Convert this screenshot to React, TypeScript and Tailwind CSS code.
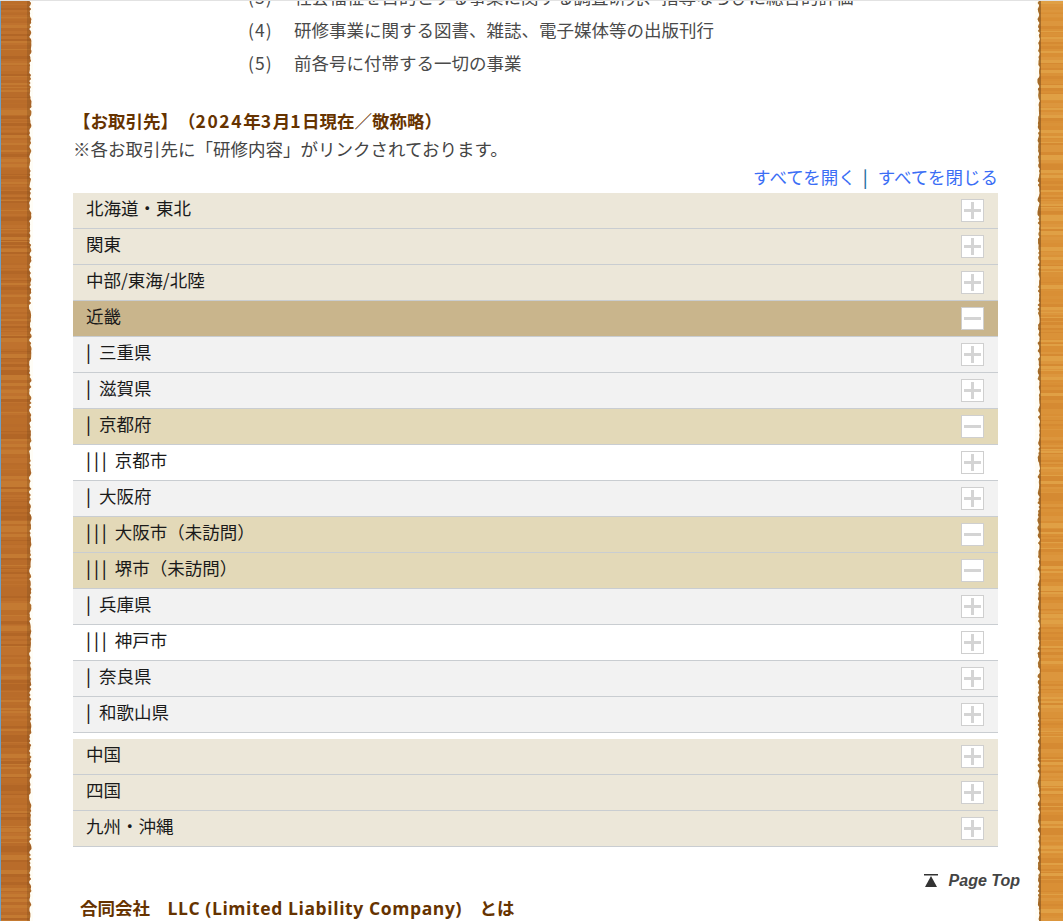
const NOTO = "font-['Noto_Sans_CJK_JP','Noto_Sans',sans-serif]";

type Row = { bars?: number; label: string; kind: "region" | "open" | "pref" | "active" | "city"; minus?: boolean };

const topRows: Row[] = [
  { label: "北海道・東北", kind: "region" },
  { label: "関東", kind: "region" },
  { label: "中部/東海/北陸", kind: "region" },
  { label: "近畿", kind: "open", minus: true },
  { bars: 1, label: "三重県", kind: "pref" },
  { bars: 1, label: "滋賀県", kind: "pref" },
  { bars: 1, label: "京都府", kind: "active", minus: true },
  { bars: 3, label: "京都市", kind: "city" },
  { bars: 1, label: "大阪府", kind: "pref" },
  { bars: 3, label: "大阪市（未訪問）", kind: "active", minus: true },
  { bars: 3, label: "堺市（未訪問）", kind: "active", minus: true },
  { bars: 1, label: "兵庫県", kind: "pref" },
  { bars: 3, label: "神戸市", kind: "city" },
  { bars: 1, label: "奈良県", kind: "pref" },
  { bars: 1, label: "和歌山県", kind: "pref" },
];

const bottomRows: Row[] = [
  { label: "中国", kind: "region" },
  { label: "四国", kind: "region" },
  { label: "九州・沖縄", kind: "region" },
];

const rowBg = {
  region: "bg-[#ece7d9]",
  open: "bg-[#c9b58c]",
  pref: "bg-[#f2f2f2]",
  active: "bg-[#e3d9b8]",
  city: "bg-white",
};

// small seeded random so the torn edge stays the same on every render
function seeded(seed: number) {
  let s = seed;
  return () => {
    s = (s * 9301 + 49297) % 233280;
    return s / 233280;
  };
}

function WoodStrip({ side }: { side: "left" | "right" }) {
  const isLeft = side === "left";
  const w = isLeft ? 33 : 28;
  const rnd = seeded(isLeft ? 17 : 91);
  const tones = isLeft
    ? ["#b96c2b", "#bf722d", "#b26628", "#c47a33", "#bb6e2c"]
    : ["#d98f36", "#dc963d", "#d58a33", "#e0a045", "#da9238"];

  const bands: { y: number; h: number; c: string }[] = [];
  for (let y = 0; y < 921; ) {
    const h = 1 + Math.floor(rnd() * 3);
    bands.push({ y, h, c: tones[Math.floor(rnd() * tones.length)] });
    y += h;
  }

  // torn edge: fine teeth, a dark fringe right behind it
  const pts: string[] = [];
  for (let y = 0; y <= 921; y += 2) {
    const d = 1.5 + rnd() * 2.5;
    pts.push(`${isLeft ? w - d : d + 1},${y}`);
  }
  const edge = isLeft
    ? `0,0 ${pts.join(" ")} 0,921`
    : `${w},0 ${pts.join(" ")} ${w},921`;

  return (
    <svg width={w} height={921} className="block shrink-0" viewBox={`0 0 ${w} 921`}>
      <defs>
        <clipPath id={`wood-${side}`}>
          <polygon points={edge} />
        </clipPath>
        <filter id={`soft-${side}`} x="-20%" y="0" width="140%" height="100%">
          <feGaussianBlur stdDeviation="0.5" />
        </filter>
      </defs>
      <rect x={0} y={0} width={w} height={921} fill="#fffdf6" />
      <g filter={`url(#soft-${side})`}>
        <g clipPath={`url(#wood-${side})`}>
          {bands.map((b) => (
            <rect key={b.y} x={0} y={b.y} width={w} height={b.h} fill={b.c} />
          ))}
          <rect
            x={isLeft ? w - 6 : 0}
            y={0}
            width={6}
            height={921}
            fill="#6e4218"
            opacity={isLeft ? 0.25 : 0.5}
          />
        </g>
      </g>
      {isLeft && <rect x={0} y={0} width={1} height={921} fill="#6f9fc4" />}
    </svg>
  );
}

function ToggleIcon({ minus }: { minus?: boolean }) {
  return (
    <svg width={23} height={23} viewBox="0 0 23 23" className="block">
      <rect x={0.5} y={0.5} width={22} height={22} fill="#ffffff" stroke="#cfcfcf" />
      <rect x={3} y={10} width={17} height={3} fill="#d4d4d4" />
      {!minus && <rect x={10} y={3} width={3} height={17} fill="#d4d4d4" />}
    </svg>
  );
}

function AccordionRow({ row }: { row: Row }) {
  return (
    <div
      className={`flex h-9 items-center justify-between border-b border-[#c9cdd1] pl-[13px] pr-[14px] ${rowBg[row.kind]}`}
    >
      <span className="-mt-[5px] flex text-[17.5px] leading-6 text-[#1a1a1a]">
        {row.bars && <span className="mr-[5px] font-medium tracking-[3px]">{"|".repeat(row.bars)}</span>}
        <span>{row.label}</span>
      </span>
      <ToggleIcon minus={row.minus} />
    </div>
  );
}

export default function App() {
  return (
    <div className={`flex h-[921px] w-[1063px] overflow-hidden border-t border-[#e2e2e2] bg-white [text-spacing-trim:space-all] ${NOTO}`}>
      <WoodStrip side="left" />

      <main className="flex min-w-0 flex-1 flex-col pl-[40px] pr-[37px]">
        <ol className="-mt-[21px] pl-[175px] text-[17.5px] leading-[33px] text-[#4a4a4a]">
          <li className="flex whitespace-nowrap">
            <span className="w-[46px] tracking-[1px]">(3)</span>
            <span>社会福祉を目的とする事業に関する調査研究、指導ならびに総合的評価</span>
          </li>
          <li className="flex">
            <span className="w-[46px] tracking-[1px]">(4)</span>
            <span>研修事業に関する図書、雑誌、電子媒体等の出版刊行</span>
          </li>
          <li className="flex">
            <span className="w-[46px] tracking-[1px]">(5)</span>
            <span>前各号に付帯する一切の事業</span>
          </li>
        </ol>

        <h3 className="mt-[30px] text-[17.5px] leading-6 font-bold text-[#663300]">
          【お取引先】（<span className="tracking-[1.6px]">2024</span>年<span className="tracking-[1.6px]">3</span>月<span className="tracking-[1.6px]">1</span>日現在／敬称略）
        </h3>
        <p className="mt-1 text-[17.5px] leading-6 text-[#444444]">
          ※各お取引先に「研修内容」がリンクされております。
        </p>

        <div className="mt-1 mb-1 text-right text-[17.5px] leading-6 text-[#3b6ef5]">
          <span>すべてを開く</span>
          <span className="mr-[10px] ml-[7px] font-medium text-[#1f6f9f]">|</span>
          <span>すべてを閉じる</span>
        </div>

        <div>
          {topRows.map((row) => (
            <AccordionRow key={row.label} row={row} />
          ))}
        </div>
        <div className="mt-1.5">
          {bottomRows.map((row) => (
            <AccordionRow key={row.label} row={row} />
          ))}
        </div>

        <div className="mt-6 mr-[-22px] flex items-center justify-end gap-[11px] text-[#444444]">
          <svg width={14} height={14} viewBox="0 0 14 14" className="block">
            <rect x={0} y={0} width={14} height={1.5} fill="#333333" />
            <polygon points="7,2 13,13 1,13" fill="#333333" />
          </svg>
          <span className="font-['Liberation_Sans',sans-serif] text-base leading-5 font-bold italic">
            Page Top
          </span>
        </div>

        <h3 className="mt-[5px] pl-[7px] text-[17.5px] leading-6 font-bold whitespace-pre text-[#663300]">
          合同会社　<span className="font-['Open_Sans',sans-serif] tracking-[0.6px]">LLC (Limited Liability Company)</span>　とは
        </h3>
      </main>

      <WoodStrip side="right" />
    </div>
  );
}
